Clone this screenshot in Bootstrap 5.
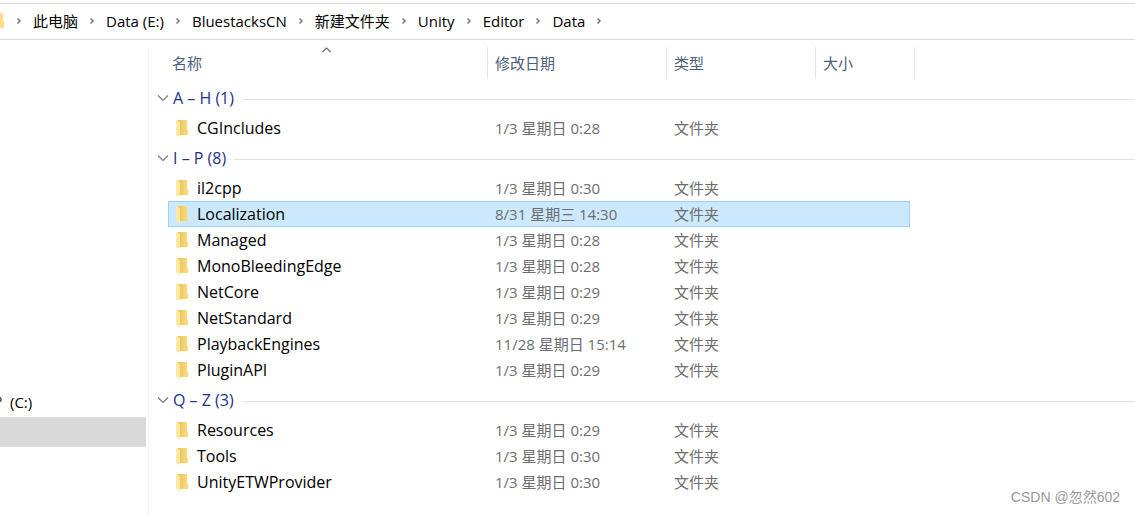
<!DOCTYPE html>
<html lang="zh-CN">
<head>
<meta charset="utf-8">
<meta name="viewport" content="width=device-width, initial-scale=1">
<title>Data</title>
<link href="https://cdn.jsdelivr.net/npm/bootstrap@5.3.0/dist/css/bootstrap.min.css" rel="stylesheet">
<style>
body{font:15px/26px "Open Sans","Noto Sans CJK SC",sans-serif;color:#000;background:#fff;overflow:hidden}
a,a:hover{color:inherit;text-decoration:none}
svg{display:block;flex:none}
.address{margin-top:3px;height:37px;padding-bottom:2px;border-top:1px solid #d9d9d9;border-bottom:1px solid #d9d9d9}
.crumb-sep{width:28px}
.tree{width:148px;padding-top:349px;flex:none}
.drive{height:28px;padding-bottom:2px}
.drive-current{height:30px;width:146px;background:#d9d9d9}
.files{min-height:467px;margin-top:7px;border-left:1px solid #f3f3f3}
.listing{width:100%;table-layout:fixed;border-collapse:separate;border-spacing:0}
.listing th{font-weight:400}
.listing th,.listing td{padding:0;white-space:nowrap}
.c-indent{width:19px}.c-name{width:320px}.c-date{width:179px}.c-type{width:149px}.c-size{width:94px}.c-end{width:5px}
.listing thead th{height:32px;color:#4c607a;border-right:1px solid #e5e5e5}
.listing thead th.bare{border-right:0}
.listing thead th.text-col,.listing td.text-col{padding-left:7px}
.listing thead th:nth-child(2){padding-left:4px}
.sort-mark{position:absolute;top:0;left:154px}
.listing .gap-row td{height:2px}
.group-head{height:34px;padding:2px 0 0 8px;color:#1e3287}
.group-toggle{border:0;background:none;padding:0 0 2px;color:inherit;font-size:16px;line-height:26px}
.group-rule{height:1px;background:#e2e2e2}
.file-row td{height:26px;line-height:24px;color:#6d6d6d;border-top:1px solid transparent;border-bottom:1px solid transparent}
.file-row .name-cell{font-size:16px;color:#000;border-left:1px solid transparent}
.file-row.selected td{background:#cce8ff;border-color:#99d1ff}
.file-row.selected td.bare{background:none;border-color:transparent}
.file-row.selected td.last-cell{border-right:1px solid #99d1ff}
.name-cell a{padding-left:7px;gap:8px}
.watermark{position:absolute;right:15px;bottom:4px;font:14px/26px "Liberation Sans","Noto Sans CJK SC",sans-serif;color:#999}
</style>
</head>
<body>
<svg class="position-absolute" width="0" height="0" aria-hidden="true">
  <defs>
    <linearGradient id="back" x1="0" x2="1"><stop offset="0" stop-color="#e9c25a"/><stop offset="1" stop-color="#fbdd7e"/></linearGradient>
  </defs>
  <symbol id="sep" viewBox="0 0 27 12"><path d="M12 3.500 14.500 6l-2.500 2.500" fill="none" stroke="#777" stroke-width="1.500"/></symbol>
  <symbol id="down" viewBox="0 0 12 8"><path d="M1 1.500 6 6.500 11 1.500" fill="none" stroke="#777" stroke-width="1.100"/></symbol>
</svg>
<nav class="address d-flex align-items-center" aria-label="路径">
  <svg width="5" height="15" viewBox="0 0 5 15"><path d="M0 0h3v8h1v7H0z" fill="#ffdc82"/></svg>
  <ol class="list-unstyled d-flex align-items-center mb-0 text-nowrap" id="crumbs"></ol>
</nav>
<div class="d-flex">
  <aside class="tree">
    <a href="#" class="drive d-flex align-items-center">
      <svg width="10" height="12" viewBox="0 0 10 12"><path d="M0 1.500c1.500.5 1.500 3.500 0 4" fill="none" stroke="#222" stroke-width="1.200"/></svg>
      <span>(C:)</span>
    </a>
    <div class="drive-current"></div>
  </aside>
  <main class="files flex-grow-1">
    <table class="listing">
      <colgroup><col class="c-indent"><col class="c-name"><col class="c-date"><col class="c-type"><col class="c-size"><col class="c-end"><col></colgroup>
      <thead>
        <tr>
          <th class="bare"></th>
          <th class="position-relative" scope="col">名称
            <svg class="sort-mark" width="9" height="6" viewBox="0 0 9 6"><path d="M.5 5 4.500 1l4 4" fill="none" stroke="#666" stroke-width="1.100"/></svg></th>
          <th class="text-col" scope="col">修改日期</th>
          <th class="text-col" scope="col">类型</th>
          <th class="text-col bare" scope="col">大小</th>
          <th></th><th class="bare"></th>
        </tr>
      </thead>
      <tbody id="rows"><tr class="gap-row"><td colspan="7"></td></tr></tbody>
    </table>
  </main>
</div>
<div class="watermark">CSDN @忽然602</div>
<script>
const sep = '<svg class="crumb-sep" height="12"><use href="#sep"/></svg>';
document.getElementById('crumbs').innerHTML = sep +
  ['此电脑','Data (E:)','BluestacksCN','新建文件夹','Unity','Editor','Data']
    .map(t => `<li class="d-flex align-items-center"><a href="#">${t}</a>${sep}</li>`).join('');
const groups = [
  ['A – H (1)', [['CGIncludes','1/3 星期日 0:28']]],
  ['I – P (8)', [['il2cpp','1/3 星期日 0:30'],['Localization','8/31 星期三 14:30'],['Managed','1/3 星期日 0:28'],
    ['MonoBleedingEdge','1/3 星期日 0:28'],['NetCore','1/3 星期日 0:29'],['NetStandard','1/3 星期日 0:29'],
    ['PlaybackEngines','11/28 星期日 15:14'],['PluginAPI','1/3 星期日 0:29']]],
  ['Q – Z (3)', [['Resources','1/3 星期日 0:29'],['Tools','1/3 星期日 0:30'],['UnityETWProvider','1/3 星期日 0:30']]]
];
const folder = '<svg width="13" height="17" viewBox="0 0 13 17"><path d="M2 0h9v9l1 1v5H3z" fill="url(#back)"/><path d="M0 0h1l3 2.500V17L0 15z" fill="#ffe9a2"/></svg>';
document.getElementById('rows').innerHTML += groups.map(([title, files]) =>
  `<tr><th colspan="7" scope="rowgroup"><div class="group-head d-flex align-items-center">
    <button type="button" class="group-toggle d-flex align-items-center gap-1"><svg width="12" height="8"><use href="#down"/></svg><span>${title}</span></button>
    <div class="group-rule flex-grow-1 ms-2"></div></div></th></tr>` +
  files.map(([n, d]) => `<tr class="file-row${n === 'Localization' ? ' selected' : ''}"><td class="bare"></td>
    <td class="name-cell"><a href="#" class="d-flex align-items-center">${folder}<span>${n}</span></a></td>
    <td class="text-col">${d}</td><td class="text-col">文件夹</td><td class="last-cell"></td><td class="bare"></td><td class="bare"></td></tr>`).join('')
).join('');
</script>
<script src="https://cdn.jsdelivr.net/npm/bootstrap@5.3.0/dist/js/bootstrap.bundle.min.js"></script>
</body>
</html>
